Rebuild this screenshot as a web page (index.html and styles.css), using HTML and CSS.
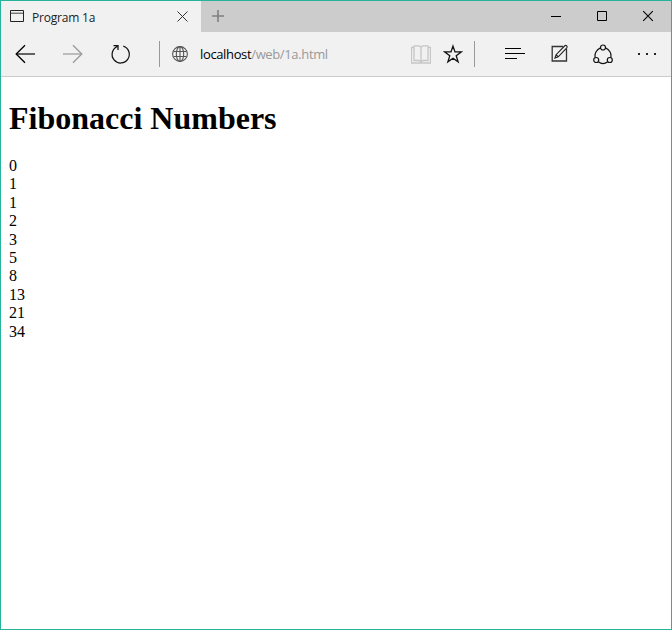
FILE: index.html
```html
<!DOCTYPE html>
<html lang="en">
<head>
<meta charset="utf-8">
<title>Program 1a</title>
<link rel="stylesheet" href="styles.css">
</head>
<body>
<div class="window">
  <header class="tabs">
    <div class="tab">
      <svg class="tab-icon" width="14" height="12" viewBox="0 0 14 12"><path d="M.5.5h13v11H.5z" fill="none" stroke="#222"/><path d="M1 2.500h12" stroke="#bbb"/><path d="M1 3.500h12" stroke="#777"/></svg>
      <span class="tab-title">Program 1a</span>
      <svg class="tab-close" width="11" height="11" viewBox="0 0 11 11"><path d="M.5.5l10 10M10.500.5l-10 10" stroke="#333" fill="none"/></svg>
    </div>
    <svg class="new-tab" width="12" height="12" viewBox="0 0 12 12"><path d="M0 6h12M6 0v12" stroke="#808080" stroke-width="1.600"/></svg>
    <div class="controls">
      <svg width="46" height="31" viewBox="0 0 46 31"><path d="M18 15.500h10" stroke="#000"/></svg>
      <svg width="46" height="31" viewBox="0 0 46 31"><path d="M18.500 10.500h9v9h-9z" fill="none" stroke="#000"/></svg>
      <svg width="46" height="31" viewBox="0 0 46 31"><path d="M18.200 10.200l9.600 9.600M27.800 10.200l-9.600 9.600" stroke="#000" stroke-width="1.100"/></svg>
    </div>
  </header>
  <nav class="toolbar">
    <svg width="48" height="44" viewBox="0 0 48 44"><path d="M15 22h19" stroke="#333" stroke-width="1.500"/><path d="M24 13.200L15.200 22l8.800 8.800" fill="none" stroke="#000" stroke-width="1.300"/></svg>
    <svg width="48" height="44" viewBox="0 0 48 44"><path d="M14 22h19" stroke="#aaa" stroke-width="1.500"/><path d="M24 13.200l8.800 8.800-8.800 8.800" fill="none" stroke="#999" stroke-width="1.300"/></svg>
    <svg width="48" height="44" viewBox="0 0 48 44"><path d="M26.300 14.200A8.600 8.600 0 1 1 20.300 14.500M16.500 13.600h4.500v4.400" fill="none" stroke="#111" stroke-width="1.250"/></svg>
    <span class="divider"></span>
    <svg class="globe" width="16" height="16" viewBox="0 0 16 16"><g fill="none" stroke="#555" stroke-width="1.100"><circle cx="8" cy="8" r="7.400"/><ellipse cx="8" cy="8" rx="3.700" ry="7.400"/><path d="M8 .6v14.800M1.500 5.500h13M1.500 10.500h13"/></g></svg>
    <span class="url">localhost<span class="path">/web/1a.html</span></span>
    <svg class="book" width="20" height="19" viewBox="0 0 20 19"><path d="M2.500 2.500h-2v15.500h19V2.500h-2M3 .9h5l2 1.200 2-1.200h5v14.600H12l-2 1.500-2-1.500H3zM10 2V17" fill="none" stroke="#c6c6c6" stroke-width="1.300"/></svg>
    <svg class="star" width="20" height="20" viewBox="0 0 20 20"><path d="M10 2.100l2 5.850h6.200l-5 3.850 1.900 6.100L10 14.200l-5.100 3.700 1.900-6.100-5-3.850h6.200z" fill="none" stroke="#111" stroke-width="1.300"/></svg>
    <span class="divider divider-end"></span>
    <svg class="hub" width="20" height="11" viewBox="0 0 20 11"><path d="M0 .5h16M0 5.500h20M0 10.500h12" stroke="#000"/></svg>
    <svg class="note" width="18" height="18" viewBox="0 0 18 18"><path d="M12 2.500H1.200v14.500h14.300V5" fill="none" stroke="#333" stroke-width="1.300"/><path d="M4 14l1.100-3.300 8.700-8.900q1-.8 1.900.1t.1 1.900L7.200 12.800zM5.100 10.700l2.100 2.100" fill="none" stroke="#222" stroke-width="1.150"/></svg>
    <svg class="share" width="20" height="21" viewBox="0 0 20 21"><g fill="none" stroke="#111" stroke-width="1.200"><circle cx="10" cy="3.500" r="2.500"/><circle cx="3.200" cy="16" r="2.500"/><circle cx="16.800" cy="16" r="2.500"/><path d="M7.500 3.900A8.500 8.500 0 0 0 2.200 13.600M12.500 3.900a8.500 8.500 0 0 1 5.300 9.700M5.300 17.700q4.700 3.800 9.400 0"/></g></svg>
    <svg class="more" width="18" height="2" viewBox="0 0 18 2"><path d="M0 0h2v2H0zM8 0h2v2H8zM16 0h2v2h-2z" fill="#222"/></svg>
  </nav>
  <main class="page">
    <h1>Fibonacci Numbers</h1>
    <p>0<br>1<br>1<br>2<br>3<br>5<br>8<br>13<br>21<br>34</p>
  </main>
</div>
</body>
</html>
```
FILE: styles.css
```css
* { box-sizing: border-box; }
body { margin: 0; }
svg { display: block; flex: none; }
.window {
  display: flex;
  flex-direction: column;
  height: 630px;
  border: 1px solid #25b49b;
  background: #fff;
}
.tabs {
  display: flex;
  height: 31px;
  background: #ccc;
  font-family: "Open Sans", "Noto Sans", sans-serif;
}
.tab {
  display: flex;
  width: 200px;
  padding: 10px 12px 0 9px;
  background: #f1f1f1;
}
.tab-icon { margin-top: -1px; }
.tab-title {
  flex: 1;
  margin: -2px 0 0 8px;
  font-size: 12px;
  line-height: 17px;
  letter-spacing: -0.2px;
  color: #222;
}
.tab-close { margin-right: 1px; }
.new-tab { margin: 9px 0 0 11px; }
.controls { display: flex; margin-left: auto; }
.toolbar {
  display: flex;
  align-items: center;
  height: 45px;
  background: #f1f1f1;
  border-bottom: 1px solid #ccc;
}
.divider {
  width: 1px;
  height: 26px;
  margin-left: 14px;
  background: #999;
}
.globe { margin-left: 12px; }
.url {
  flex: none;
  width: 211px;
  padding-left: 12px;
  font: 13px/18px "Open Sans", "Noto Sans", sans-serif;
  letter-spacing: -0.36px;
  white-space: nowrap;
  color: #000;
}
.path { color: #999; }
.book { margin-left: 12px; }
.star { margin-left: 12px; }
.divider-end { margin-left: 11px; }
.hub { margin: 0 0 1px 30px; }
.note { margin: 0 0 2px 26px; }
.share { margin-left: 24px; }
.more { margin-left: 25px; }
.page {
  padding: 0 8px;
  font-family: "Liberation Serif", "Times New Roman", serif;
  color: #000;
}
h1 {
  margin: 23px 0 20px;
  font-size: 32px;
  line-height: 37px;
}
p {
  margin: 0;
  font-size: 16px;
  line-height: 18.4px;
}
```
